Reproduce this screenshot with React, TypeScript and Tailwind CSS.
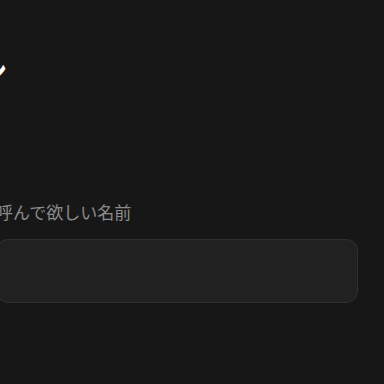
import React from 'react';

const font = { fontFamily: '"Noto Sans CJK JP", "Noto Sans", sans-serif' };

export default function App() {
  const [name, setName] = React.useState('');

  return (
    <div className="min-h-screen w-full overflow-hidden bg-[#171717]" style={font}>
      <div className="ml-[-4px] w-[362px] pt-[50px]">
        <h1 className="ml-[-101px] whitespace-nowrap text-[28px] font-semibold leading-[40px] text-white">
          ログイン
        </h1>
        <div className="mt-[109px] flex flex-col gap-[14px]">
          <label htmlFor="nickname" className="text-[17px] leading-[26px] text-[#8c8c8c]">
            呼んで欲しい名前
          </label>
          <input
            id="nickname"
            value={name}
            onChange={(e) => setName(e.target.value)}
            className="h-[64px] w-full rounded-[12px] border border-[#303030] bg-[#212121] px-4 text-[17px] text-white outline-none"
          />
        </div>
      </div>
    </div>
  );
}
